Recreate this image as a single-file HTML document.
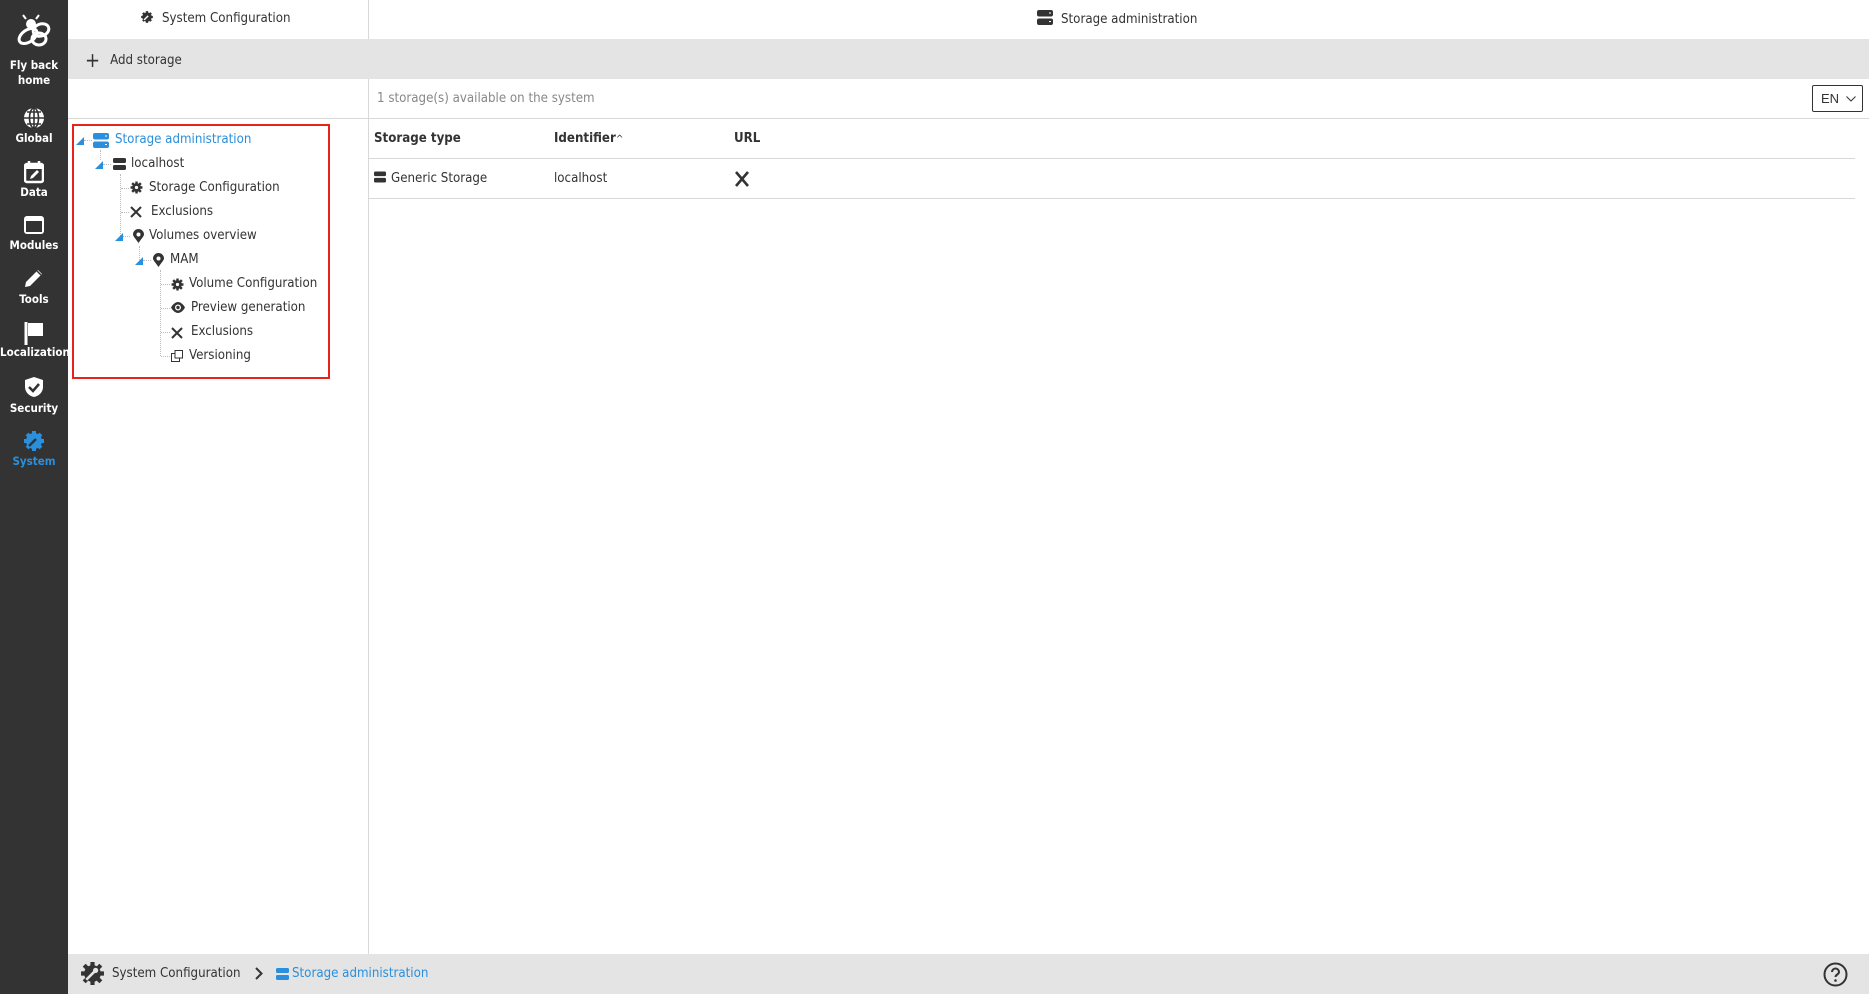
<!DOCTYPE html>
<html><head><meta charset="utf-8"><style>
*{box-sizing:border-box;margin:0;padding:0}
body{width:1869px;height:994px;overflow:hidden;background:#fff;font-family:"DejaVu Sans Condensed","DejaVu Sans","Liberation Sans",sans-serif;font-size:13px;color:#333;position:relative}
.abs{position:absolute}
.side{left:0;top:0;width:68px;height:994px;background:#333}
.si{position:absolute;left:0;width:68px;text-align:center;color:#fff;font-size:11.5px;font-weight:bold;font-family:"DejaVu Sans Condensed","DejaVu Sans",sans-serif}
.si svg{display:block;margin:0 auto}
.t{position:absolute;white-space:nowrap;font-size:13.2px;line-height:16px}
.dot{position:absolute;border-left:1px dotted #bbb}
.doth{position:absolute;border-top:1px dotted #bbb;height:0}
.tri{position:absolute;width:0;height:0;border-left:8px solid transparent;border-bottom:8px solid #2a8fdc}
</style></head><body>
<div class="abs side"></div>
<div class="si" style="top:14px">
<svg width="40" height="36" viewBox="0 0 40 36"><g fill="none" stroke="#fff" stroke-width="3"><ellipse cx="14" cy="22" rx="10" ry="6" transform="rotate(-35 14 22)"/><ellipse cx="27" cy="16" rx="8" ry="6" transform="rotate(-20 27 16)"/><ellipse cx="25" cy="25" rx="7" ry="6"/></g><circle cx="17" cy="10" r="5" fill="#fff"/><path d="M12 5l-3-4M22 5l3-4" stroke="#fff" stroke-width="2"/></svg>
<div style="margin-top:8px;line-height:15px">Fly back<br>home</div></div>
<div class="si" style="top:107px"><svg width="22" height="22" viewBox="0 0 22 22"><circle cx="11" cy="11" r="10" fill="#fff"/><path d="M1 11h20M11 1v20M4 5h14M4 17h14" stroke="#333" stroke-width="1.6"/><ellipse cx="11" cy="11" rx="4.5" ry="10" fill="none" stroke="#333" stroke-width="1.6"/></svg><div style="margin-top:2px">Global</div></div>
<div class="si" style="top:160px"><svg width="20" height="24" viewBox="0 0 20 24"><rect x="1" y="4" width="18" height="18" rx="2" fill="none" stroke="#fff" stroke-width="2.5"/><rect x="1" y="4" width="18" height="5" fill="#fff"/><path d="M5 1v5M15 1v5" stroke="#fff" stroke-width="2.5"/><path d="M6 19l1-3 6-6 2 2-6 6z" fill="#fff"/></svg><div style="margin-top:1px">Data</div></div>
<div class="si" style="top:215px"><svg width="22" height="20" viewBox="0 0 22 20"><rect x="1" y="1" width="20" height="18" rx="3" fill="#fff"/><rect x="3" y="6" width="16" height="11" fill="#333"/></svg><div style="margin-top:3px">Modules</div></div>
<div class="si" style="top:267px"><svg width="22" height="22" viewBox="0 0 22 22"><path d="M2 20l1-5L15 3l4 4L7 19z" fill="#fff"/><path d="M14 4l4 4" stroke="#333" stroke-width="1.5"/></svg><div style="margin-top:3px">Tools</div></div>
<div class="si" style="top:321px"><svg width="22" height="24" viewBox="0 0 22 24"><path d="M3 1v23" stroke="#fff" stroke-width="3"/><path d="M5 2h15v13H5z" fill="#fff"/></svg><div style="margin-top:0">Localization</div></div>
<div class="si" style="top:376px"><svg width="22" height="22" viewBox="0 0 22 22"><path d="M11 1l9 3v7c0 5-4 9-9 10C6 20 2 16 2 11V4z" fill="#fff"/><path d="M6 11l4 4 6-7" fill="none" stroke="#333" stroke-width="2.5"/></svg><div style="margin-top:3px">Security</div></div>
<div class="si" style="top:430px;color:#2a8fdc"><svg width="24" height="22" viewBox="0 0 24 22"><circle cx="12" cy="11" r="8" fill="#2a8fdc"/><g stroke="#2a8fdc" stroke-width="4"><path d="M12 1v20M2 11h20M5 4l14 14M19 4L5 18"/></g><path d="M7 16l7-7" stroke="#333" stroke-width="2.5"/></svg><div style="margin-top:2px">System</div></div>

<div class="abs" style="left:368px;top:0;width:1px;height:954px;background:#d8d8d8"></div>
<div class="abs" style="left:68px;top:39px;width:1801px;height:40px;background:#e4e4e4"></div>
<div class="abs" style="left:68px;top:118px;width:1801px;height:1px;background:#d8d8d8"></div>
<div class="abs" style="left:140px;top:10px;font-size:13.2px;white-space:nowrap"><svg width="14" height="14" viewBox="0 0 24 22" style="vertical-align:-2px;margin-right:8px"><circle cx="12" cy="11" r="8" fill="#333"/><g stroke="#333" stroke-width="4"><path d="M12 1v20M2 11h20M5 4l14 14M19 4L5 18"/></g><path d="M7 16l7-7" stroke="#fff" stroke-width="2.5"/></svg>System Configuration</div>
<div class="abs" style="left:85px;top:48px;font-size:13.2px;white-space:nowrap"><span style="font-size:20px;font-weight:300;vertical-align:-3px;margin-right:10px">+</span>Add storage</div>

<div class="abs" style="left:72px;top:124px;width:258px;height:255px;border:2px solid #e8231c"></div>
<div class="tri" style="left:76px;top:137px"></div><div class="doth" style="left:84px;top:140px;width:8px"></div>
<svg class="abs" style="left:93px;top:133px" width="16" height="15" viewBox="0 0 16 15"><rect y="0" width="16" height="6.5" rx="2" fill="#2a8fdc"/><rect y="8.5" width="16" height="6.5" rx="2" fill="#2a8fdc"/><path d="M12 3h2M12 11.5h2" stroke="#fff"/></svg>
<div class="t" style="left:115px;top:132px;color:#2a8fdc">Storage administration</div>
<div class="dot" style="left:100px;top:150px;height:10px"></div>
<div class="tri" style="left:95px;top:161px"></div><div class="doth" style="left:103px;top:164px;width:8px"></div>
<svg class="abs" style="left:113px;top:158px" width="13" height="12" viewBox="0 0 13 12"><rect width="13" height="5" rx="1.5" fill="#333"/><rect y="7" width="13" height="5" rx="1.5" fill="#333"/></svg>
<div class="t" style="left:131px;top:156px">localhost</div>
<div class="dot" style="left:120px;top:174px;height:62px"></div>
<div class="doth" style="left:121px;top:188px;width:8px"></div>
<svg class="abs" style="left:130px;top:181px" width="13" height="13" viewBox="0 0 24 24"><circle cx="12" cy="12" r="8" fill="#333"/><g stroke="#333" stroke-width="4.5"><path d="M12 1v22M1 12h22M4 4l16 16M20 4L4 20"/></g><circle cx="12" cy="12" r="3" fill="#fff"/></svg>
<div class="t" style="left:149px;top:180px">Storage Configuration</div>
<div class="doth" style="left:121px;top:212px;width:8px"></div>
<svg class="abs" style="left:130px;top:206px" width="12" height="12" viewBox="0 0 12 12"><path d="M1 1l10 10M11 1L1 11" stroke="#333" stroke-width="2"/></svg>
<div class="t" style="left:151px;top:204px">Exclusions</div>
<div class="tri" style="left:115px;top:233px"></div><div class="doth" style="left:123px;top:236px;width:7px"></div>
<svg class="abs" style="left:133px;top:229px" width="11" height="14" viewBox="0 0 11 14"><path d="M5.5 14C2 9 0 7 0 5.5a5.5 5.5 0 0111 0C11 7 9 9 5.5 14z" fill="#333"/><circle cx="5.5" cy="5.5" r="2" fill="#fff"/></svg>
<div class="t" style="left:149px;top:228px">Volumes overview</div>
<div class="dot" style="left:139px;top:246px;height:14px"></div>
<div class="tri" style="left:135px;top:257px"></div><div class="doth" style="left:143px;top:260px;width:8px"></div>
<svg class="abs" style="left:153px;top:253px" width="11" height="14" viewBox="0 0 11 14"><path d="M5.5 14C2 9 0 7 0 5.5a5.5 5.5 0 0111 0C11 7 9 9 5.5 14z" fill="#333"/><circle cx="5.5" cy="5.5" r="2" fill="#fff"/></svg>
<div class="t" style="left:170px;top:252px">MAM</div>
<div class="dot" style="left:160px;top:270px;height:86px"></div>
<div class="doth" style="left:161px;top:284px;width:9px"></div>
<svg class="abs" style="left:171px;top:278px" width="13" height="13" viewBox="0 0 24 24"><circle cx="12" cy="12" r="8" fill="#333"/><g stroke="#333" stroke-width="4.5"><path d="M12 1v22M1 12h22M4 4l16 16M20 4L4 20"/></g><circle cx="12" cy="12" r="3" fill="#fff"/></svg>
<div class="t" style="left:189px;top:276px">Volume Configuration</div>
<div class="doth" style="left:161px;top:308px;width:9px"></div>
<svg class="abs" style="left:171px;top:302px" width="14" height="11" viewBox="0 0 14 11"><path d="M0 5.5C2 2 4.5 0 7 0s5 2 7 5.5C12 9 9.5 11 7 11S2 9 0 5.5z" fill="#333"/><circle cx="7" cy="5.5" r="3" fill="#fff"/><circle cx="7" cy="5.5" r="1.7" fill="#333"/></svg>
<div class="t" style="left:191px;top:300px">Preview generation</div>
<div class="doth" style="left:161px;top:332px;width:9px"></div>
<svg class="abs" style="left:171px;top:327px" width="12" height="12" viewBox="0 0 12 12"><path d="M1 1l10 10M11 1L1 11" stroke="#333" stroke-width="2"/></svg>
<div class="t" style="left:191px;top:324px">Exclusions</div>
<div class="doth" style="left:161px;top:356px;width:9px"></div>
<svg class="abs" style="left:171px;top:350px" width="12" height="12" viewBox="0 0 12 12"><rect x="4" y="0.5" width="7.5" height="7.5" fill="none" stroke="#333"/><path d="M4 3.5H0.5V11.5H8.5V8" fill="none" stroke="#333"/></svg>
<div class="t" style="left:189px;top:348px">Versioning</div>

<div class="abs" style="left:1037px;top:10px;font-size:13.2px;white-space:nowrap"><svg width="16" height="15" viewBox="0 0 16 15" style="vertical-align:-2px;margin-right:8px"><rect width="16" height="6.5" rx="2" fill="#333"/><rect y="8.5" width="16" height="6.5" rx="2" fill="#333"/><path d="M12 3h2M12 11.5h2" stroke="#fff"/></svg>Storage administration</div>
<div class="abs" style="left:377px;top:91px;color:#888;font-size:13.2px;white-space:nowrap">1 storage(s) available on the system</div>
<div class="abs" style="left:1812px;top:85px;width:51px;height:27px;border:1px solid #333;border-radius:2px;font-size:13px;padding:5px 0 0 8px;font-family:'Liberation Sans',sans-serif">EN <svg width="10" height="6" viewBox="0 0 10 6" style="margin-left:3px;vertical-align:1px"><path d="M0.5 0.5l4.5 4.5 4.5-4.5" fill="none" stroke="#333"/></svg></div>
<div class="abs" style="left:374px;top:131px;font-weight:bold;font-size:13.2px">Storage type</div>
<div class="abs" style="left:554px;top:131px;font-weight:bold;font-size:13.2px">Identifier<span style="font-weight:normal;font-size:10px">^</span></div>
<div class="abs" style="left:734px;top:131px;font-weight:bold;font-size:13.2px">URL</div>
<div class="abs" style="left:369px;top:158px;width:1486px;height:1px;background:#d8d8d8"></div>
<div class="abs" style="left:374px;top:171px;font-size:13.2px;white-space:nowrap"><svg width="12" height="12" viewBox="0 0 13 12" style="vertical-align:-1px;margin-right:5px"><rect width="13" height="5" rx="1.5" fill="#333"/><rect y="7" width="13" height="5" rx="1.5" fill="#333"/></svg>Generic Storage</div>
<div class="abs" style="left:554px;top:171px;font-size:13.2px">localhost</div>
<svg class="abs" style="left:734px;top:171px" width="16" height="16" viewBox="0 0 16 16"><path d="M2 1l12 14M14 1L2 15" stroke="#333" stroke-width="2.6"/></svg>
<div class="abs" style="left:369px;top:198px;width:1486px;height:1px;background:#d8d8d8"></div>

<div class="abs" style="left:68px;top:954px;width:1801px;height:40px;background:#e4e4e4"></div>
<svg class="abs" style="left:80px;top:961px" width="25" height="25" viewBox="0 0 24 24"><circle cx="12" cy="12" r="8" fill="#333"/><g stroke="#333" stroke-width="4"><path d="M12 1v22M1 12h22M4 4l16 16M20 4L4 20"/></g><path d="M6 18l8-8" stroke="#e4e4e4" stroke-width="2.5"/><circle cx="15" cy="9" r="2.5" fill="#e4e4e4"/></svg>
<div class="abs" style="left:112px;top:966px;font-size:13.2px;white-space:nowrap">System Configuration</div>
<svg class="abs" style="left:255px;top:967px" width="8" height="13" viewBox="0 0 8 13"><path d="M1 1l5.5 5.5L1 12" fill="none" stroke="#333" stroke-width="2"/></svg>
<svg class="abs" style="left:276px;top:968px" width="13" height="12" viewBox="0 0 13 12"><rect width="13" height="5" rx="1.5" fill="#2a8fdc"/><rect y="7" width="13" height="5" rx="1.5" fill="#2a8fdc"/></svg>
<div class="abs" style="left:292px;top:966px;font-size:13.2px;color:#2a8fdc;white-space:nowrap">Storage administration</div>
<svg class="abs" style="left:1823px;top:962px" width="25" height="25" viewBox="0 0 25 25"><circle cx="12.5" cy="12.5" r="11" fill="none" stroke="#333" stroke-width="2"/><path d="M9 10a3.5 3.5 0 117 0c0 2.5-3.5 2.5-3.5 5" fill="none" stroke="#333" stroke-width="2"/><circle cx="12.5" cy="18.5" r="1.3" fill="#333"/></svg>
</body></html>
